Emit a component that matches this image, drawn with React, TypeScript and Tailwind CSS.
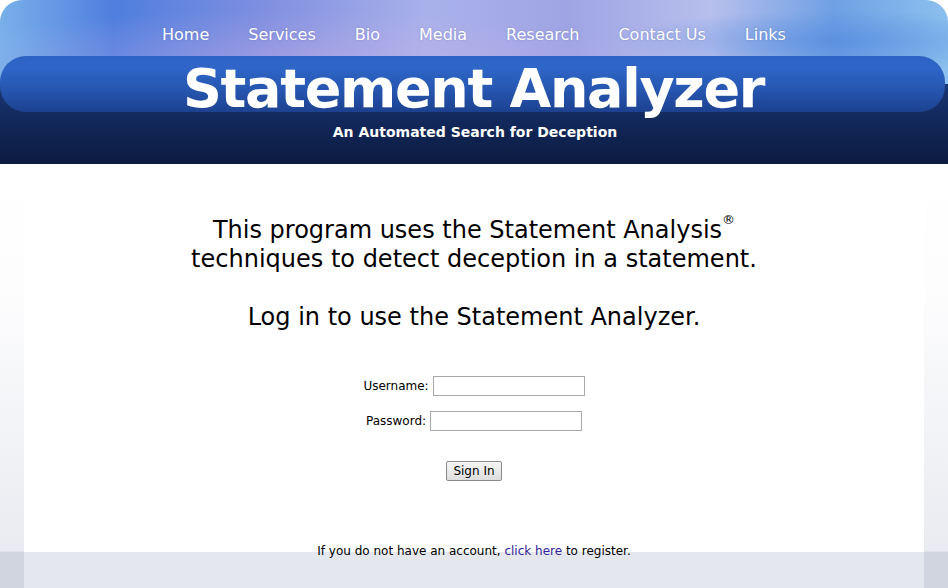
import React from 'react'

const navItems = ['Home', 'Services', 'Bio', 'Media', 'Research', 'Contact Us', 'Links']

export default function App() {
  return (
    <div className="w-[948px] h-[588px] overflow-hidden bg-white font-['DejaVu_Sans',Tahoma,sans-serif]">
      {/* Header */}
      <header className="relative h-[164px] rounded-t-[22px] overflow-hidden bg-[linear-gradient(90deg,#78b0ea_0%,#4f7ede_12%,#7f8fe0_28%,#a9b1ea_45%,#9fa4e4_60%,#b7bfec_75%,#6fa0e4_88%,#8cc0ee_100%)]">
        <div className="absolute inset-0 bg-[radial-gradient(ellipse_at_30%_40%,rgba(220,180,230,0.35),transparent_40%),radial-gradient(ellipse_at_88%_25%,rgba(70,130,220,0.5),transparent_18%)]" />
        <nav className="relative h-[56px] flex items-center justify-center gap-[39px] pt-[14px] text-[16px] text-white">
          {navItems.map((item) => (
            <a key={item} href="#" className="[text-shadow:0_0_2px_rgba(60,80,160,0.4)]">
              {item}
            </a>
          ))}
        </nav>
        <div className="relative h-[108px] bg-[linear-gradient(to_bottom,transparent_0,transparent_28px,#1b3775_28px,#132a5e_55%,#0c1b40_100%)]">
          <div className="h-[56px] mr-[3px] rounded-[26px] bg-[linear-gradient(to_bottom,#2d62c2_0%,#2f66c8_20%,#2656b0_60%,#1d4190_100%)] flex items-center justify-center">
            <h1 className="text-[54px] font-bold text-white tracking-[-1.3px] leading-none pt-[10px] pl-[2px]">
              Statement Analyzer
            </h1>
          </div>
          <p className="text-center text-white font-bold text-[14px] mt-[10px] pl-[2px]">
            An Automated Search for Deception
          </p>
        </div>
      </header>

      {/* Body */}
      <main className="flex h-[424px]">
        <div className="w-[24px] bg-[linear-gradient(to_bottom,#ffffff_0,#fdfdfe_30%,#e9ebf0_387px,#d0d5e0_388px,#d0d5e0_100%)]" />
        <div className="flex-1 flex flex-col items-center bg-[linear-gradient(to_bottom,#ffffff_0,#ffffff_388px,#e4e7ee_388px,#e4e7ee_100%)] text-black">
          <div className="mt-[52px] text-center text-[24px] leading-[29px]">
            <p>
              This program uses the Statement Analysis<sup className="text-[13px] align-[8px]">®</sup>
            </p>
            <p>techniques to detect deception in a statement.</p>
            <p className="mt-[29px]">Log in to use the Statement Analyzer.</p>
          </div>

          <form className="mt-[44px] flex flex-col items-center text-[12px]">
            <label className="flex items-center gap-[4px]">
              <span>Username:</span>
              <input type="text" className="w-[152px] h-[20px] border border-[#a9a9a9] bg-white" />
            </label>
            <label className="flex items-center gap-[4px] mt-[15px]">
              <span>Password:</span>
              <input type="password" className="w-[152px] h-[20px] border border-[#a9a9a9] bg-white" />
            </label>
            <button
              type="button"
              className="mt-[30px] w-[56px] h-[20px] text-[12px] border border-[#8a8a8a] rounded-[2px] bg-[linear-gradient(to_bottom,#f6f6f6,#dedede)]"
            >
              Sign In
            </button>
          </form>

          <p className="mt-[61px] text-[12px]">
            If you do not have an account,{' '}
            <a href="#" className="text-[#33229a]">
              click here
            </a>{' '}
            to register.
          </p>
        </div>
        <div className="w-[24px] bg-[linear-gradient(to_bottom,#ffffff_0,#fdfdfe_30%,#e9ebf0_387px,#d0d5e0_388px,#d0d5e0_100%)]" />
      </main>
    </div>
  )
}
